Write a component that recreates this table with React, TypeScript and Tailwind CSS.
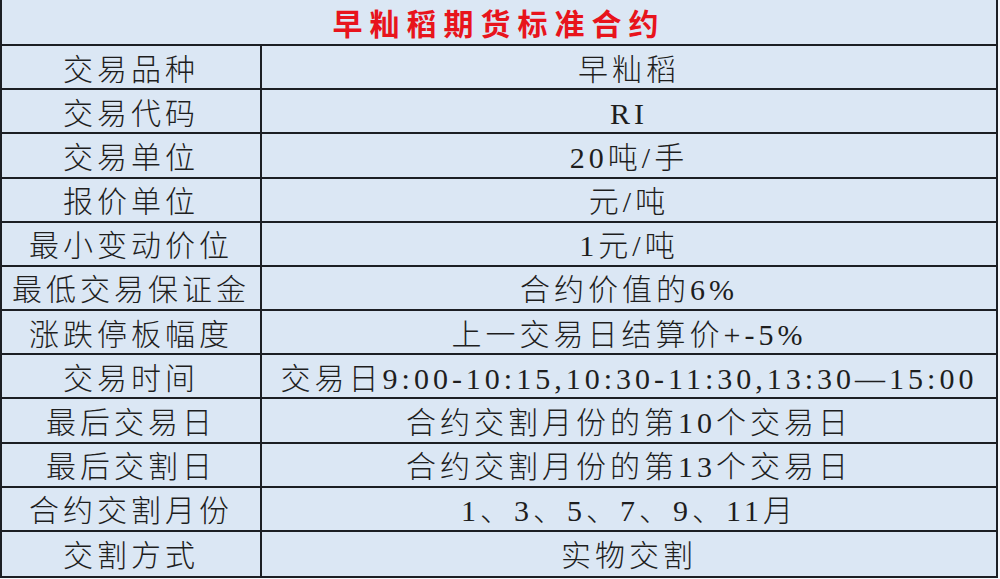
import React from "react";

const rows: [string, string][] = [
  ["交易品种", "早籼稻"],
  ["交易代码", "RI"],
  ["交易单位", "20吨/手"],
  ["报价单位", "元/吨"],
  ["最小变动价位", "1元/吨"],
  ["最低交易保证金", "合约价值的6%"],
  ["涨跌停板幅度", "上一交易日结算价+-5%"],
  ["交易时间", "交易日9:00-10:15,10:30-11:30,13:30—15:00"],
  ["最后交易日", "合约交割月份的第10个交易日"],
  ["最后交割日", "合约交割月份的第13个交易日"],
  ["合约交割月份", "1、3、5、7、9、11月"],
  ["交割方式", "实物交割"],
];

export default function App() {
  return (
    <div className="w-[1000px] h-[579px] bg-[#f4f7fb]">
      <div
        className="w-[998px] h-[578px] bg-[#dbe7f4] border-l-2 border-r-2 border-b-2 border-[#1c1f24] grid grid-rows-[46px_repeat(12,1fr)] text-[#1e1e1e]"
        style={{ fontFamily: '"Liberation Serif", "Noto Sans CJK SC", serif' }}
      >
        <div className="border-b-2 border-[#1c1f24] flex items-center justify-center pt-[5px]">
          <span className="text-[30px] font-bold tracking-[7px] text-[#e8141c] leading-none">
            早籼稻期货标准合约
          </span>
        </div>
        {rows.map(([k, v], i) => (
          <div
            key={k}
            className={`grid grid-cols-[260px_1fr] ${i < rows.length - 1 ? "border-b-2 border-[#1c1f24]" : ""}`}
          >
            <div className="border-r-2 border-[#1c1f24] flex items-center justify-center pt-[5px]">
              <span className="text-[30px] tracking-[4px] leading-none font-light whitespace-nowrap">{k}</span>
            </div>
            <div className="flex items-center justify-center pt-[5px]">
              <span className="text-[30px] tracking-[4px] leading-none font-light whitespace-nowrap">{v}</span>
            </div>
          </div>
        ))}
      </div>
    </div>
  );
}
